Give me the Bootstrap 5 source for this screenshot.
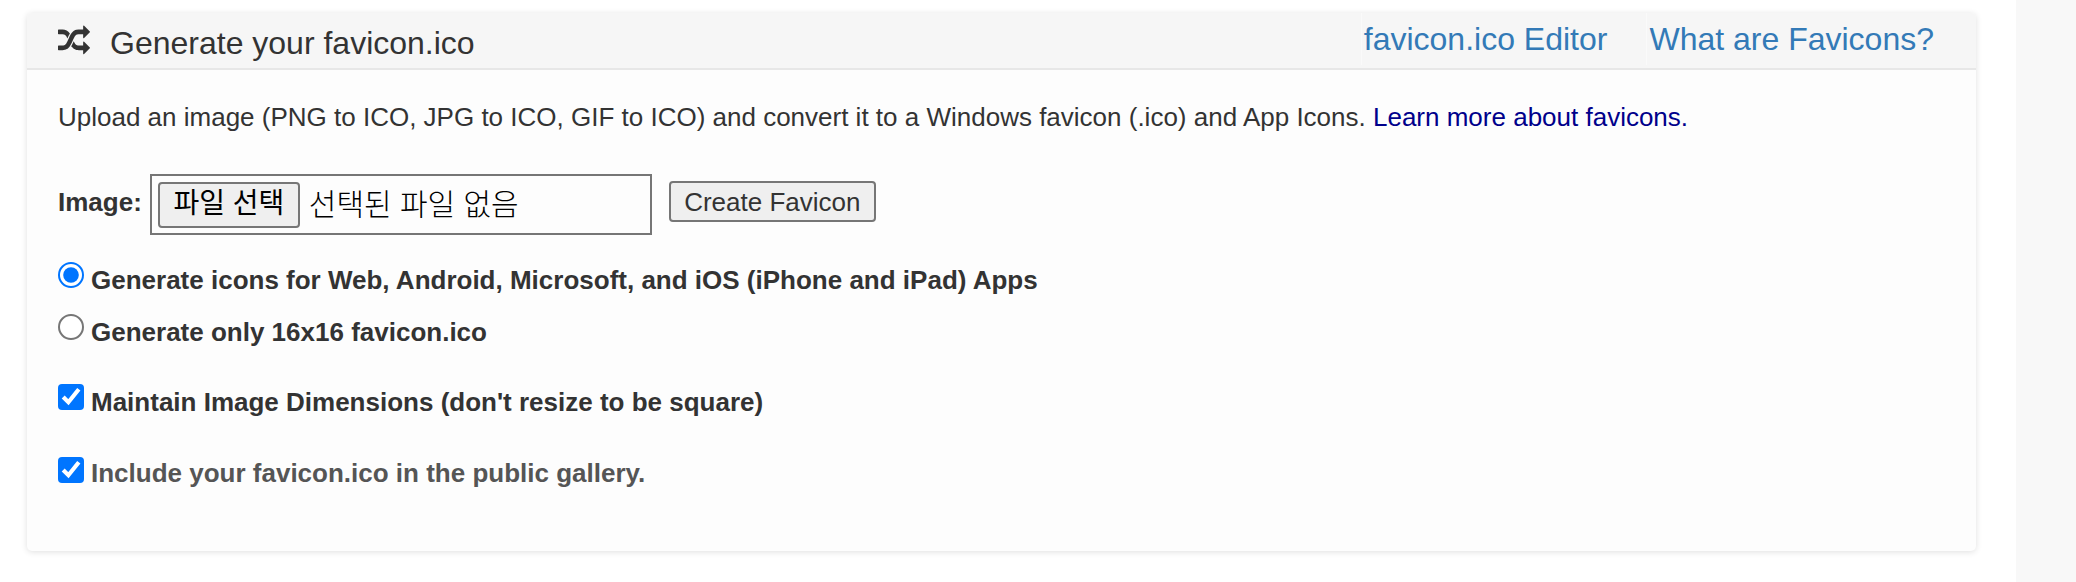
<!DOCTYPE html>
<html lang="en">

<head>
  <meta charset="utf-8">
  <title>Generate your favicon.ico</title>
  <link href="https://cdn.jsdelivr.net/npm/bootstrap@5.3.0/dist/css/bootstrap.min.css" rel="stylesheet">
  <style>
    body { font-family: "Liberation Sans", Arial, sans-serif; font-size: 26px; color: #333; background: #fff; height: 582px; overflow: hidden; }
    .page-wrap { padding: 13px 0 0 27px; width: 2016px; height: 582px; background: #fff; }
    .side-strip { flex: 1; background: #f8f8f8; height: 582px; }
    .gen-panel { width: 1949px; height: 538px; background: #fdfdfd; border: 0; border-radius: 5px; box-shadow: 0 1px 6px rgba(0,0,0,.13); overflow: hidden; }
    .gen-head { height: 57px; background: #f6f6f6; border-bottom: 2px solid #e7e7e7; padding: 0 42px 0 31px; }
    .gen-head .ttl { font-size: 32px; margin-left: 20px; margin-top: 5px; color: #333; }
    .gen-head a { font-size: 32px; color: #337ab7; text-decoration: none; margin-left: 39px; padding-left: 2px; border-left: 1px solid #fafafa; line-height: 52px; margin-bottom: 3px; }
    .gen-body { padding: 0 31px; }
    .intro { margin: 0; padding-top: 33px; line-height: 28px; }
    .intro a { color: #00008b; text-decoration: none; }
    .img-row { margin-top: 43px; }
    .img-row b { margin-right: 8px; margin-bottom: 5px; }
    .file-box { width: 502px; height: 61px; border: 2px solid #767676; padding: 0 6px; font-family: "Liberation Sans", "Noto Sans CJK KR", sans-serif; color: #000; font-size: 30px; font-weight: 300; }
    .file-btn { height: 46px; width: 142px; background: #efefef; border: 2px solid #767676; border-radius: 4px; color: #000; font-size: 28px; line-height: 1; padding: 0 0 2px; margin-right: 9px; font-family: inherit; font-weight: 400; }
    .create-btn { height: 41px; width: 207px; margin-left: 17px; margin-bottom: 6px; background: #efefef; border: 2px solid #767676; border-radius: 4px; color: #333; font-size: 26px; line-height: 1; padding: 0; font-family: inherit; }
    .opt-line { display: flex; align-items: flex-start; font-weight: 700; margin: 0; gap: 7px; line-height: 30px; }
    .opt-line input { width: 13px; height: 13px; margin: 0; flex: none; zoom: 2; }
    .opt-line span { margin-top: 3px; }
    .opt-a { margin-top: 27px; }
    .opt-b { margin-top: 19px; }
    .opt-c { margin-top: 37px; }
    .opt-d { margin-top: 38px; color: #555; }
    .opt-d input { margin-top: 1px; }
  </style>
</head>

<body>
  <div class="d-flex">
    <div class="page-wrap">
      <div class="card gen-panel">
        <div class="gen-head d-flex align-items-center">
          <svg width="32" height="32" viewBox="0 0 1792 1792" fill="#333" aria-hidden="true"><path d="M666 481q-60 92-137 273-22-45-37-72.5t-40.5-63.5-51-56.5-63-35-81.5-14.5h-224q-14 0-23-9t-9-23v-192q0-14 9-23t23-9h224q250 0 410 225zm1126 799q0 14-9 23l-320 320q-9 9-23 9-13 0-22.5-9.5t-9.5-22.5v-192q-32 0-85 .5t-81 1-73-1-71-5-64-10.5-63-18.5-58-28.5-59-40-55-53.5-56-69.5q59-93 136-273 22 45 37 72.5t40.5 63.5 51 56.5 63 35 81.5 14.5h256v-192q0-14 9-23t23-9q12 0 24 10l319 319q9 9 9 23zm0-896q0 14-9 23l-320 320q-9 9-23 9-13 0-22.5-9.5t-9.5-22.5v-192h-256q-48 0-87 15t-69 45-51 61.5-45 77.5q-32 62-78 171-29 66-49.5 111t-54 105-64 100-74 83-90 68.5-106.5 42-128 16.5h-224q-14 0-23-9t-9-23v-192q0-14 9-23t23-9h224q48 0 87-15t69-45 51-61.5 45-77.5q32-62 78-171 29-66 49.5-111t54-105 64-100 74-83 90-68.5 106.5-42 128-16.5h256v-192q0-14 9-23t23-9q12 0 24 10l319 319q9 9 9 23z"/></svg>
          <span class="ttl">Generate your favicon.ico</span>
          <a href="#" class="ms-auto">favicon.ico Editor</a>
          <a href="#">What are Favicons?</a>
        </div>
        <div class="gen-body">
          <p class="intro">Upload an image (PNG to ICO, JPG to ICO, GIF to ICO) and convert it to a Windows favicon (.ico) and App Icons. <a href="#">Learn more about favicons.</a></p>
          <form>
            <div class="img-row d-flex align-items-center">
              <b>Image:</b>
              <div class="file-box d-flex align-items-center">
                <button type="button" class="file-btn">파일 선택</button>
                <span>선택된 파일 없음</span>
              </div>
              <button type="button" class="create-btn">Create Favicon</button>
            </div>
            <label class="opt-line opt-a"><input type="radio" name="mode" checked><span>Generate icons for Web, Android, Microsoft, and iOS (iPhone and iPad) Apps</span></label>
            <label class="opt-line opt-b"><input type="radio" name="mode"><span>Generate only 16x16 favicon.ico</span></label>
            <label class="opt-line opt-c"><input type="checkbox" checked><span>Maintain Image Dimensions (don't resize to be square)</span></label>
            <label class="opt-line opt-d"><input type="checkbox" checked><span>Include your favicon.ico in the public gallery.</span></label>
          </form>
        </div>
      </div>
    </div>
    <div class="side-strip"></div>
  </div>
  <script src="https://cdn.jsdelivr.net/npm/bootstrap@5.3.0/dist/js/bootstrap.bundle.min.js"></script>
</body>

</html>
